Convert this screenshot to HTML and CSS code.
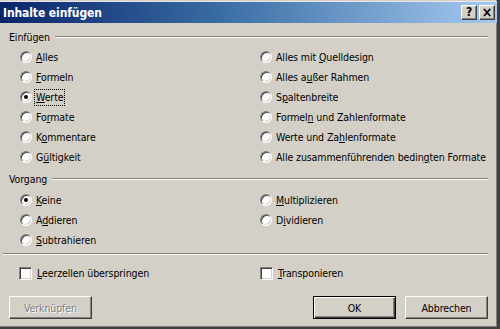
FILE: index.html
```html
<!DOCTYPE html>
<html lang="de">
<head>
<meta charset="utf-8">
<title>Inhalte einfügen</title>
<link rel="stylesheet" href="styles.css">
</head>
<body>
<div class="window">
  <div class="titlebar">
    <span class="title">Inhalte einfügen</span>
    <div class="tbuttons">
      <span class="tbtn">?</span>
      <span class="tbtn tclose">×</span>
    </div>
  </div>
  <div class="content">
    <div class="legend"><span>Einfügen</span><i class="etch"></i></div>
    <div class="grid six">
      <div class="opt"><span class="radio"></span><span class="lbl"><u>A</u>lles</span></div>
      <div class="opt"><span class="radio"></span><span class="lbl">Alles mit <u>Q</u>uelldesign</span></div>
      <div class="opt"><span class="radio"></span><span class="lbl"><u>F</u>ormeln</span></div>
      <div class="opt"><span class="radio"></span><span class="lbl">Alles a<u>u</u>ßer Rahmen</span></div>
      <div class="opt"><span class="radio on"></span><span class="lbl focus"><u>W</u>erte</span></div>
      <div class="opt"><span class="radio"></span><span class="lbl">S<u>p</u>altenbreite</span></div>
      <div class="opt"><span class="radio"></span><span class="lbl">Fo<u>r</u>mate</span></div>
      <div class="opt"><span class="radio"></span><span class="lbl">Formel<u>n</u> und Zahlenformate</span></div>
      <div class="opt"><span class="radio"></span><span class="lbl">K<u>o</u>mmentare</span></div>
      <div class="opt"><span class="radio"></span><span class="lbl">Werte und Za<u>h</u>lenformate</span></div>
      <div class="opt"><span class="radio"></span><span class="lbl">G<u>ü</u>ltigkeit</span></div>
      <div class="opt"><span class="radio"></span><span class="lbl">Alle zusammenführenden bedin<u>g</u>ten Formate</span></div>
    </div>
    <div class="legend second"><span>Vorgang</span><i class="etch"></i></div>
    <div class="grid three">
      <div class="opt"><span class="radio on"></span><span class="lbl"><u>K</u>eine</span></div>
      <div class="opt"><span class="radio"></span><span class="lbl"><u>M</u>ultiplizieren</span></div>
      <div class="opt"><span class="radio"></span><span class="lbl">A<u>d</u>dieren</span></div>
      <div class="opt"><span class="radio"></span><span class="lbl">D<u>i</u>vidieren</span></div>
      <div class="opt"><span class="radio"></span><span class="lbl"><u>S</u>ubtrahieren</span></div>
      <div class="opt"></div>
    </div>
    <i class="etch sep"></i>
    <div class="grid checks">
      <div class="opt"><span class="check"></span><span class="lbl"><u>L</u>eerzellen überspringen</span></div>
      <div class="opt"><span class="check"></span><span class="lbl"><u>T</u>ransponieren</span></div>
    </div>
    <div class="buttons">
      <span class="btn disabled">Verknüpfen</span>
      <span class="spacer"></span>
      <span class="btn default">OK</span>
      <span class="btn">Abbrechen</span>
    </div>
  </div>
</div>
</body>
</html>
```
FILE: styles.css
```css
html, body {
  margin: 0;
  padding: 0;
  background: #d4d0c8;
}
body {
  font-family: "DejaVu Sans Condensed", "DejaVu Sans", sans-serif;
  font-stretch: condensed;
  font-size: 10.5px;
  letter-spacing: -0.1px;
  color: #000;
}
.window {
  width: 500px;
  height: 329px;
  box-sizing: border-box;
  background: #d4d0c8;
  border-right: 3px solid #404040;
  border-bottom: 2px solid #404040;
  box-shadow: inset -1px -1px 0 #808080;
  overflow: hidden;
}
.titlebar {
  height: 21px;
  margin-top: 1px;
  background: linear-gradient(90deg, #0a246a 0%, #3a6ea5 45%, #a6caf0 100%);
  display: flex;
  align-items: center;
  justify-content: space-between;
  padding: 0 2px 0 3px;
  border-top: 1px solid #e8e8e8;
}
.title {
  color: #fff;
  font-weight: bold;
  font-size: 12px;
  letter-spacing: -0.1px;
}
.tbuttons {
  display: flex;
  gap: 2px;
}
.tbtn {
  width: 16px;
  height: 15px;
  box-sizing: border-box;
  background: #d4d0c8;
  border: 1px solid;
  border-color: #fff #404040 #404040 #fff;
  box-shadow: inset -1px -1px 0 #808080;
  font-family: "DejaVu Sans", sans-serif;
  font-weight: bold;
  font-size: 12px;
  line-height: 12px;
  text-align: center;
}
.tclose {
  font-size: 14px;
}
.content {
  padding: 0 9px 0 0;
}
.legend {
  display: flex;
  align-items: center;
  height: 14px;
  margin-top: 7px;
  padding-left: 9px;
  gap: 5px;
}
.legend.second {
  margin-top: 5px;
}
.etch {
  display: block;
  flex: 1;
  height: 0;
  border-top: 1px solid #808080;
  border-bottom: 1px solid #fff;
}
.grid {
  display: grid;
  grid-template-columns: 240px 1fr;
  padding-left: 20px;
}
.grid.six {
  grid-auto-rows: 20px;
  margin-top: 3px;
}
.grid.three {
  grid-auto-rows: 20px;
  margin-top: 4px;
}
.sep {
  margin: 3px 0 0 3px;
}
.grid.checks {
  grid-auto-rows: 20px;
  margin-top: 8px;
  padding-left: 19px;
  grid-template-columns: 241px 1fr;
}
.opt {
  display: flex;
  align-items: center;
}
.radio {
  width: 12px;
  height: 12px;
  box-sizing: border-box;
  border-radius: 50%;
  border: 1px solid;
  border-color: #808080 #fff #fff #808080;
  background: #fff;
  box-shadow: inset 1px 1px 0 #404040, inset -1px -1px 0 #d4d0c8;
  margin-right: 2px;
  position: relative;
  flex: none;
}
.radio.on::after {
  content: "";
  position: absolute;
  left: 3px;
  top: 3px;
  width: 4px;
  height: 4px;
  border-radius: 50%;
  background: #000;
}
.check {
  width: 13px;
  height: 13px;
  box-sizing: border-box;
  border: 1px solid;
  border-color: #808080 #fff #fff #808080;
  background: #fff;
  box-shadow: inset 1px 1px 0 #404040, inset -1px -1px 0 #d4d0c8;
  margin-right: 3px;
  flex: none;
}
.lbl {
  padding: 1px 1px;
  border: 1px solid transparent;
  line-height: 13px;
  white-space: nowrap;
}
.lbl.focus {
  border: 1px dotted #000;
}
.lbl u {
  text-decoration: underline;
  text-underline-offset: 1px;
}
.buttons {
  display: flex;
  gap: 9px;
  margin-top: 13px;
  padding-left: 9px;
}
.spacer {
  flex: 1;
}
.btn {
  width: 83px;
  height: 23px;
  box-sizing: border-box;
  border: 1px solid;
  border-color: #fff #404040 #404040 #fff;
  box-shadow: inset -1px -1px 0 #808080;
  display: flex;
  align-items: center;
  justify-content: center;
  background: #d4d0c8;
}
.btn.default {
  border: 1px solid #000;
  box-shadow: inset 1px 1px 0 #fff, inset -1px -1px 0 #404040, inset -2px -2px 0 #808080;
}
.btn.disabled {
  color: #808080;
  text-shadow: 1px 1px 0 #fff;
}
```
